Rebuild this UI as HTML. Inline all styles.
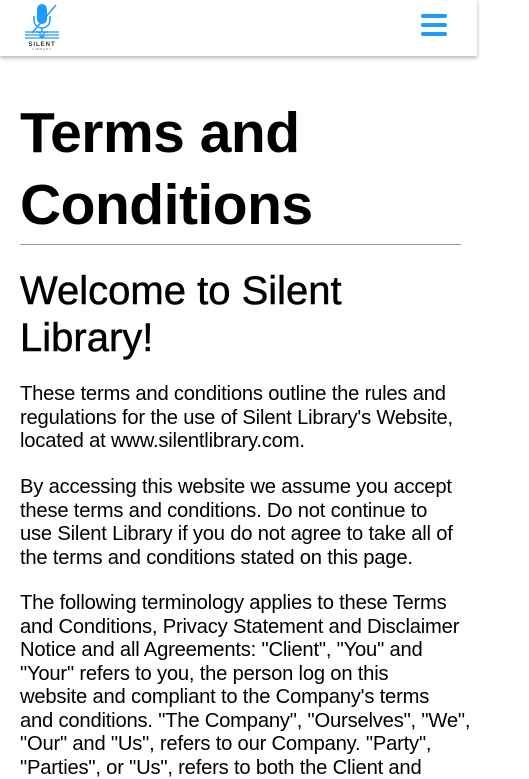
<!DOCTYPE html>
<html><head><meta charset="utf-8"><style>
html,body{margin:0;padding:0;background:#fff;overflow:hidden}
body{width:529px;height:779px;font-family:"Liberation Sans",sans-serif;color:#000;position:relative}
.hdr{position:absolute;left:0;top:0;width:477px;height:56px;background:#fff;box-shadow:0 2px 4px rgba(0,0,0,.3)}
.main{position:absolute;left:20px;top:0;width:442px}
h1{position:absolute;top:97px;left:0;margin:0;font-size:57px;line-height:72px;font-weight:bold;letter-spacing:-0.5px;white-space:nowrap}
hr{position:absolute;top:244px;left:0;width:441px;margin:0;border:0;border-top:1px solid #999}
h2{position:absolute;top:268px;left:0;margin:0;font-size:40px;line-height:47px;font-weight:normal;white-space:nowrap;-webkit-text-stroke:0.5px #000}
.p{position:absolute;left:0;margin:0;font-size:20.2px;line-height:23.5px;white-space:nowrap;letter-spacing:-0.2px}
</style></head><body>
<div class="hdr">
<svg style="position:absolute;left:24px;top:2px" width="42" height="48" viewBox="0 0 42 48">
<rect x="13" y="2" width="10" height="20" rx="5" fill="#1e9bff"/>
<path d="M10 14v4a8 8 0 0 0 16 0v-4M18 26v4M12 30h12" stroke="#1e9bff" stroke-width="1.5" fill="none"/>
<path d="M8 31L32 3" stroke="#1e9bff" stroke-width="1.5"/>
<path d="M1 30h14l3 4 3-4h14M1 33h14l3 3 3-3h14M1 36h34" stroke="#1e9bff" stroke-width="1.3" fill="none"/>
<text x="18" y="44" font-size="6" font-family="Liberation Sans" font-weight="bold" text-anchor="middle" fill="#333" letter-spacing="1">SILENT</text>
<text x="18" y="48" font-size="3" font-family="Liberation Sans" text-anchor="middle" fill="#666" letter-spacing="1">LIBRARY</text>
</svg>
<div style="position:absolute;left:421px;top:14px;width:26px;height:4px;border-radius:2px;background:#1e9bff"></div>
<div style="position:absolute;left:421px;top:23px;width:26px;height:4px;border-radius:2px;background:#1e9bff"></div>
<div style="position:absolute;left:421px;top:32px;width:26px;height:4px;border-radius:2px;background:#1e9bff"></div>
</div>
<div class="main">
<h1>Terms and<br>Conditions</h1>
<hr>
<h2>Welcome to Silent<br>Library!</h2>
<p class="p" style="top:383px">These terms and conditions outline the rules and<br>regulations for the use of Silent Library's Website,<br>located at www.silentlibrary.com.</p>
<p class="p" style="top:476px">By accessing this website we assume you accept<br>these terms and conditions. Do not continue to<br>use Silent Library if you do not agree to take all of<br>the terms and conditions stated on this page.</p>
<p class="p" style="top:592px">The following terminology applies to these Terms<br>and Conditions, Privacy Statement and Disclaimer<br>Notice and all Agreements: "Client", "You" and<br>"Your" refers to you, the person log on this<br>website and compliant to the Company's terms<br>and conditions. "The Company", "Ourselves", "We",<br>"Our" and "Us", refers to our Company. "Party",<br>"Parties", or "Us", refers to both the Client and</p>
</div>
</body></html>
